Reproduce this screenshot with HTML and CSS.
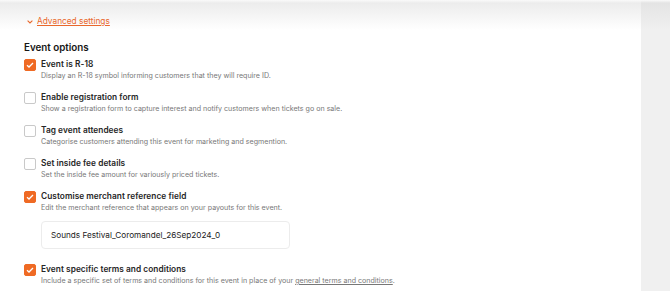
FILE: index.html
```html
<!DOCTYPE html>
<html lang="en">
<head>
<title>Event options</title>
<link rel="stylesheet" href="styles.css">
</head>
<body>
<div class="page">
  <div class="main">
    <a class="advanced" href="#">
      <svg class="chev" width="6" height="4" viewBox="0 0 6 4"><path d="M0.6 0.6 L3 3 L5.4 0.6" fill="none" stroke="#e9682c" stroke-width="1.1"/></svg>
      <span>Advanced settings</span>
    </a>

    <h2 class="title">Event options</h2>

    <div class="option">
      <span class="box checked"><svg width="8" height="6" viewBox="0 0 8 6"><path d="M1 3.2 L3 5 L7 1" fill="none" stroke="#fff" stroke-width="1.3"/></svg></span>
      <div class="text">
        <div class="label">Event is R-18</div>
        <div class="desc">Display an R-18 symbol informing customers that they will require ID.</div>
      </div>
    </div>

    <div class="option">
      <span class="box"></span>
      <div class="text">
        <div class="label">Enable registration form</div>
        <div class="desc">Show a registration form to capture interest and notify customers when tickets go on sale.</div>
      </div>
    </div>

    <div class="option">
      <span class="box"></span>
      <div class="text">
        <div class="label">Tag event attendees</div>
        <div class="desc">Categorise customers attending this event for marketing and segmention.</div>
      </div>
    </div>

    <div class="option">
      <span class="box"></span>
      <div class="text">
        <div class="label">Set inside fee details</div>
        <div class="desc">Set the inside fee amount for variously priced tickets.</div>
      </div>
    </div>

    <div class="option">
      <span class="box checked"><svg width="8" height="6" viewBox="0 0 8 6"><path d="M1 3.2 L3 5 L7 1" fill="none" stroke="#fff" stroke-width="1.3"/></svg></span>
      <div class="text">
        <div class="label">Customise merchant reference field</div>
        <div class="desc">Edit the merchant reference that appears on your payouts for this event.</div>
        <div class="field">Sounds Festival_Coromandel_26Sep2024_0</div>
      </div>
    </div>

    <div class="option">
      <span class="box checked"><svg width="8" height="6" viewBox="0 0 8 6"><path d="M1 3.2 L3 5 L7 1" fill="none" stroke="#fff" stroke-width="1.3"/></svg></span>
      <div class="text">
        <div class="label">Event specific terms and conditions</div>
        <div class="desc">Include a specific set of terms and conditions for this event in place of your <a href="#">general terms and conditions</a>.</div>
      </div>
    </div>
  </div>
  <div class="side"></div>
</div>
</body>
</html>
```

FILE: styles.css
```css
body {
  margin: 0;
  font-family: Inter, "Noto Sans", sans-serif;
  color: #1f1f1f;
}
.page {
  display: flex;
  height: 291px;
  overflow: hidden;
}
.main {
  flex: 1;
  padding: 16px 0 0 24px;
  background: linear-gradient(to bottom, #fafafa 0px, #ececec 3px, #ffffff 30px);
}
.side {
  width: 29px;
  background: linear-gradient(to bottom, #fafafa 0px, #e4e4e4 3px, #f0f0f0 30px);
}
.advanced {
  display: flex;
  align-items: center;
  gap: 4px;
  margin-left: 3px;
  color: #e9682c;
  font-size: 8.3px;
  line-height: 11px;
  text-decoration: none;
}
.advanced span {
  text-decoration: underline;
  text-underline-offset: 1px;
}
.title {
  font-size: 9.8px;
  font-weight: 600;
  line-height: 14px;
  margin: 14px 0 3px 0;
  color: #161616;
}
.option {
  display: flex;
  gap: 5px;
  margin-bottom: 10px;
}
.box {
  width: 10px;
  height: 10px;
  border: 1px solid #c9c9c9;
  border-radius: 2px;
  display: flex;
  align-items: center;
  justify-content: center;
  margin-top: 1px;
  flex-shrink: 0;
}
.box.checked {
  background-color: #ef6a24;
  border-color: #ef6a24;
}
.label {
  font-size: 8.3px;
  font-weight: 600;
  line-height: 12px;
  color: #262626;
  letter-spacing: 0.05px;
}
.desc {
  font-size: 7.1px;
  color: #777;
  line-height: 11px;
}
.desc a {
  color: #777;
}
.field {
  margin: 8px 0 4px 0;
  width: 238px;
  height: 26px;
  border: 1px solid #ececec;
  border-radius: 4px;
  padding-left: 9px;
  font-size: 8.2px;
  line-height: 26px;
  color: #222;
}
```
